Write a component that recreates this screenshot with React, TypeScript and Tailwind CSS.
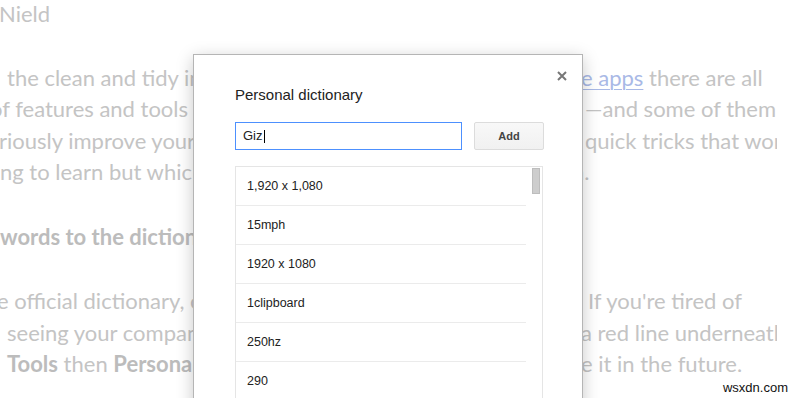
import React from "react";

const rows = [
  "1,920 x 1,080",
  "15mph",
  "1920 x 1080",
  "1clipboard",
  "250hz",
  "290",
  "2k",
];

type LineProps = {
  left?: React.ReactNode;
  right?: React.ReactNode;
  leftMl?: string;
  rightMl?: string;
};

// one line of the faded article behind the dialog
function Line({ left, right, leftMl = "ml-0", rightMl = "ml-0" }: LineProps) {
  return (
    <div className="grid grid-cols-[583px_194px]">
      <div className="overflow-hidden whitespace-nowrap">
        <span className={`inline-block ${leftMl}`}>{left}</span>
      </div>
      <div className="overflow-hidden whitespace-nowrap">
        <span className={`inline-block ${rightMl}`}>{right}</span>
      </div>
    </div>
  );
}

function Article() {
  return (
    <div className="font-['Lato','Open_Sans',sans-serif] text-[22px] leading-[31.5px] text-[#c4c4c4]">
      <div className="-mt-[2px]">
        <Line left="Nield" leftMl="-ml-[1px]" />
      </div>

      <div className="mt-[32px]">
        <Line
          left="the clean and tidy interface of Google's Docs"
          leftMl="ml-[7px]"
          right={
            <>
              <span className="text-[#a9b9e6] underline decoration-1 underline-offset-[3px]">e apps</span> there are all
            </>
          }
          rightMl="-ml-[2px]"
        />
        <Line left="of features and tools that aren't obvious" leftMl="-ml-[10px]" right="—and some of them" rightMl="ml-[2px]" />
        <Line left="riously improve your writing. Here are" leftMl="-ml-[1px]" right="quick tricks that work" rightMl="ml-[2px]" />
        <Line left="ng to learn but which will save you time" leftMl="ml-0" right="n." rightMl="-ml-[11px]" />
      </div>

      <div className="mt-[33px] font-bold text-[#bcbcbc]">
        <Line left="words to the dictionary" leftMl="ml-0" />
      </div>

      <div className="mt-[33px]">
        <Line left="e official dictionary, of course" leftMl="-ml-[3px]" right="If you're tired of" rightMl="ml-[5px]" />
        <Line left="seeing your company's name with" leftMl="ml-[7px]" right="a red line underneath" rightMl="-ml-[2px]" />
        <Line
          left={
            <>
              <b className="text-[#bcbcbc]">Tools</b> then <b className="text-[#bcbcbc]">Personal dictionary</b>
            </>
          }
          leftMl="ml-[7px]"
          right="e it in the future."
          rightMl="-ml-[2px]"
        />
      </div>
    </div>
  );
}

function Dialog() {
  return (
    <div className="absolute left-[193px] top-[54px] w-[390px] h-[380px] border border-[#b5b5b5] bg-white shadow-[0_4px_16px_rgba(0,0,0,0.22)] font-['Liberation_Sans','Arial',sans-serif]">
      <button className="absolute right-[15px] top-[16px] w-[10px] h-[10px] text-[#777]">
        <svg viewBox="0 0 10 10" className="w-[10px] h-[10px]">
          <path d="M1 1 L9 9 M9 1 L1 9" stroke="currentColor" strokeWidth="2" />
        </svg>
      </button>

      <div className="pl-[41px] pt-[31px]">
        <h2 className="text-[15px] leading-[17px] text-[#222]">Personal dictionary</h2>

        <div className="mt-[19px] flex items-center gap-[12px]">
          <div className="w-[227px] h-[28px] border border-[#4d90fe] flex items-center pl-[7px] text-[13px] text-[#222]">
            Giz
            <span className="ml-[1px] w-[1px] h-[13px] bg-[#000]" />
          </div>
          <button className="w-[70px] h-[28px] rounded-[2px] border border-[#dcdcdc] bg-gradient-to-b from-[#f8f8f8] to-[#f1f1f1] text-[11px] font-bold text-[#444]">
            Add
          </button>
        </div>

        <div className="mt-[16px] w-[308px] border border-[#e5e5e5] flex">
          <div className="w-[290px]">
            {rows.map((r) => (
              <div key={r} className="h-[39px] border-b border-[#ebebeb] flex items-center pl-[11px] text-[12.5px] text-[#222]">
                {r}
              </div>
            ))}
          </div>
          <div className="flex-1 pt-[1px]">
            <div className="ml-[6px] w-[8px] h-[26px] bg-[#cdcdcd] border border-[#bdbdbd]" />
          </div>
        </div>
      </div>
    </div>
  );
}

export default function App() {
  return (
    <div className="relative w-[800px] h-[398px] overflow-hidden bg-white">
      <Article />
      <Dialog />
      <div className="absolute right-[12px] top-[380px] font-['Liberation_Sans','Arial',sans-serif] text-[13px] leading-[15px] text-[#111]">
        wsxdn.com
      </div>
    </div>
  );
}
